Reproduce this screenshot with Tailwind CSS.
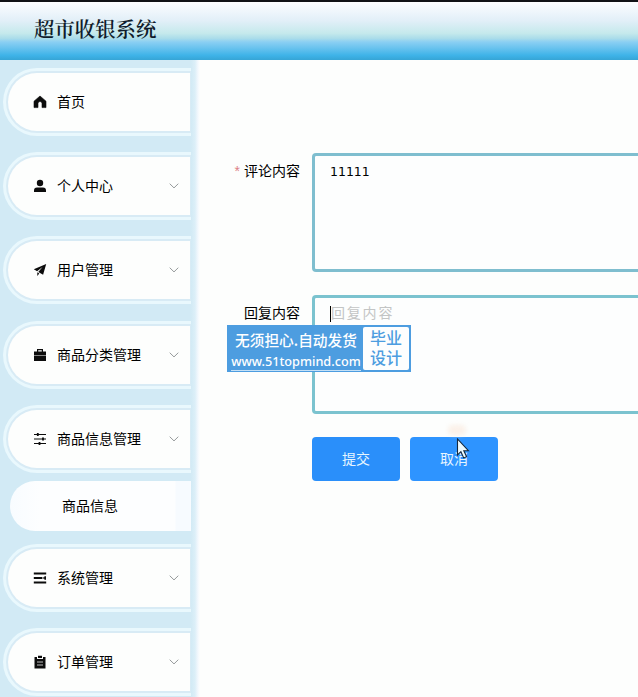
<!DOCTYPE html>
<html lang="zh-CN">
<head>
<meta charset="utf-8">
<title>超市收银系统</title>
<script src="https://cdn.jsdelivr.net/npm/@tailwindcss/browser@4"></script>
</head>
<body class="relative flex h-[697px] w-[638px] flex-col overflow-hidden bg-[#fdfefd] text-[14px] text-black font-['Liberation_Sans','Noto_Sans_CJK_SC',sans-serif]">
<header class="flex h-[60px] shrink-0 items-center border-t-2 border-[#111216] bg-[linear-gradient(to_bottom,#fcfdff_0%,#e2eff8_32%,#c5e9ec_54%,#a9dcea_63%,#8acff3_69%,#67c2ee_80%,#3eb3e8_92%,#36a5d6_100%)] pb-[2px] pl-[34px]">
  <h1 class="text-[20.4px] font-semibold leading-none text-[#101c2b] font-['Liberation_Serif','Noto_Serif_CJK_SC','Noto_Sans_CJK_SC',serif]">超市收银系统</h1>
</header>
<div class="flex min-h-0 flex-1">
  <aside class="h-full w-[200px] shrink-0 bg-[linear-gradient(to_right,#d2eaf5_0px,#d2eaf5_191px,#dceff8_195px,#f3f8fd_198px,#fdfefd_200px)] pl-[3px] pt-[8px]">
    <nav class="flex w-[188px] flex-col">
      <a class="mb-[16.2px] flex h-[68px] shrink-0 rounded-l-[34px] border-[3px] border-r-0 border-[#e9f8fd] bg-[#d8ebf5] py-[2px] pl-[2px]"><span class="mr-px flex flex-1 items-center rounded-l-[29px] bg-[#fdfefd] pl-[25px] pr-[11px]">
        <svg class="mr-[10px] size-[14px]" viewBox="0 0 14 14"><path d="M7 1 13 6.2V12.6H9V8.5a2 2 0 0 0-4 0v4.1H1V6.2z" fill="#0c0c0c" stroke="#0c0c0c" stroke-width=".6" stroke-linejoin="round"/></svg>
        <span class="flex-1">首页</span></span></a>
      <a class="mb-[16.2px] flex h-[68px] shrink-0 rounded-l-[34px] border-[3px] border-r-0 border-[#e9f8fd] bg-[#d8ebf5] py-[2px] pl-[2px]"><span class="mr-px flex flex-1 items-center rounded-l-[29px] bg-[#fdfefd] pl-[25px] pr-[11px]">
        <svg class="mr-[10px] size-[14px]" viewBox="0 0 14 14" fill="#0c0c0c"><circle cx="7" cy="4" r="3.2"/><path d="M1 13v-1.5Q1 8.5 4 8.5h6q3 0 3 3V13z"/></svg>
        <span class="flex-1">个人中心</span>
        <svg class="h-[6px] w-[10px]" viewBox="0 0 10 6" fill="none" stroke="#969a9b"><path d="m.7.7 4.3 4.2L9.3.7"/></svg></span></a>
      <a class="mb-[16.2px] flex h-[68px] shrink-0 rounded-l-[34px] border-[3px] border-r-0 border-[#e9f8fd] bg-[#d8ebf5] py-[2px] pl-[2px]"><span class="mr-px flex flex-1 items-center rounded-l-[29px] bg-[#fdfefd] pl-[25px] pr-[11px]">
        <svg class="mr-[10px] size-[14px]" viewBox="0 0 14 14" fill="#0c0c0c"><path d="M13.2 1 .8 6.3l3.3 1.9 5.4-4.1-4.2 4.8 4.8 2.9zM4.3 9.2v3.7l2-2.4z"/></svg>
        <span class="flex-1">用户管理</span>
        <svg class="h-[6px] w-[10px]" viewBox="0 0 10 6" fill="none" stroke="#969a9b"><path d="m.7.7 4.3 4.2L9.3.7"/></svg></span></a>
      <a class="mb-[16.2px] flex h-[68px] shrink-0 rounded-l-[34px] border-[3px] border-r-0 border-[#e9f8fd] bg-[#d8ebf5] py-[2px] pl-[2px]"><span class="mr-px flex flex-1 items-center rounded-l-[29px] bg-[#fdfefd] pl-[25px] pr-[11px] pt-px">
        <svg class="mr-[10px] size-[14px]" viewBox="0 0 14 14" fill="#0c0c0c"><path fill-rule="evenodd" d="M4 3.5V1h6v2.5h3v4H1v-4zm1.2 0h3.6V2.2H5.2zM1 8.1h12V13H1z"/></svg>
        <span class="flex-1">商品分类管理</span>
        <svg class="h-[6px] w-[10px]" viewBox="0 0 10 6" fill="none" stroke="#969a9b"><path d="m.7.7 4.3 4.2L9.3.7"/></svg></span></a>
      <a class="mb-[8.2px] flex h-[68px] shrink-0 rounded-l-[34px] border-[3px] border-r-0 border-[#e9f8fd] bg-[#d8ebf5] py-[2px] pl-[2px]"><span class="mr-px flex flex-1 items-center rounded-l-[29px] bg-[#fdfefd] pl-[25px] pr-[11px] pt-px">
        <svg class="mr-[10px] size-[14px]" viewBox="0 0 14 14" fill="none" stroke="#0c0c0c" stroke-width="1.2"><path d="M1 2.5h12M1 7h12M1 11.5h12"/><path d="M4.8 1.1v2.8M10 5.6v2.8M6.5 10.1v2.8" stroke-width="1.8"/></svg>
        <span class="flex-1">商品信息管理</span>
        <svg class="h-[6px] w-[10px]" viewBox="0 0 10 6" fill="none" stroke="#969a9b"><path d="m.7.7 4.3 4.2L9.3.7"/></svg></span></a>
      <a class="mb-[13.2px] ml-[7px] flex h-[50px] shrink-0 items-center rounded-l-[25px] bg-[linear-gradient(to_right,#f8fcff_0px,#fdfeff_30px,#fdfeff_165px,#f7fbff_166px)] pl-[52px] pt-[2px]">商品信息</a>
      <a class="mb-[16.2px] flex h-[68px] shrink-0 rounded-l-[34px] border-[3px] border-r-0 border-[#e9f8fd] bg-[#d8ebf5] py-[2px] pl-[2px]"><span class="mr-px flex flex-1 items-center rounded-l-[29px] bg-[#fdfefd] pl-[25px] pr-[11px]">
        <svg class="mr-[10px] size-[14px]" viewBox="0 0 14 14" fill="none" stroke="#0c0c0c" stroke-width="1.8"><path d="M.8 2.5h12.4M.8 7h8.6M.8 11.5h12.4"/><path d="M12.2 5.2v3.6M10.2 7h2" stroke-width="1.6"/></svg>
        <span class="flex-1">系统管理</span>
        <svg class="h-[6px] w-[10px]" viewBox="0 0 10 6" fill="none" stroke="#969a9b"><path d="m.7.7 4.3 4.2L9.3.7"/></svg></span></a>
      <a class="flex h-[68px] shrink-0 rounded-l-[34px] border-[3px] border-r-0 border-[#e9f8fd] bg-[#d8ebf5] py-[2px] pl-[2px]"><span class="mr-px flex flex-1 items-center rounded-l-[29px] bg-[#fdfefd] pl-[25px] pr-[11px]">
        <svg class="mr-[10px] size-[14px]" viewBox="0 0 14 14"><path d="M1.5 2H4v2h6V2h2.5v11.5h-11zM5 .8h4V3H5z" fill="#0c0c0c"/><path d="M4 7h6M4 10h6" stroke="#d5d5d5" stroke-width=".9"/></svg>
        <span class="flex-1">订单管理</span>
        <svg class="h-[6px] w-[10px]" viewBox="0 0 10 6" fill="none" stroke="#969a9b"><path d="m.7.7 4.3 4.2L9.3.7"/></svg></span></a>
    </nav>
  </aside>
  <main class="min-w-0 flex-1 pt-[93px]">
    <div class="mb-[23px] flex h-[119px]">
      <label class="w-[112px] shrink-0 pr-[12px] pt-[8px] text-right leading-[20px]"><span class="mr-[4px] text-[#dc8287]">*</span>评论内容</label>
      <div class="flex-1 rounded-l-[4px] border-[3px] border-r-0 border-[#7fbecf] bg-[#fdfefe] pl-[15px] pt-[6px] font-['DejaVu_Sans'] text-[12.5px] leading-[20px]">11111</div>
    </div>
    <div class="mb-[23px] flex h-[119px]">
      <label class="w-[112px] shrink-0 pr-[12px] pt-[8px] text-right leading-[20px]">回复内容</label>
      <div class="flex flex-1 rounded-l-[4px] border-[3px] border-r-0 border-[#7bc3cf] bg-[#fdfefe] pl-[15px] pt-[5px] leading-[20px] tracking-[1.8px] text-[#c3c5c5]"><span class="mt-[3px] h-[16px] w-px bg-black"></span><span>回复内容</span></div>
    </div>
    <div class="flex gap-[10px] pl-[112px] text-[#e6f5ff]">
      <div class="flex h-[44px] w-[88px] items-center justify-center rounded-[4px] bg-[#2a8ffa]">提交</div>
      <div class="flex h-[44px] w-[88px] items-center justify-center rounded-[4px] bg-[#2e94ff]">取消</div>
    </div>
  </main>
</div>
<div class="absolute left-[227px] top-[325px] flex h-[47px] w-[184px] bg-[#4d9de0] p-[2px] font-['Noto_Sans_CJK_SC',sans-serif]">
  <div class="flex w-[134px] shrink-0 flex-col items-center text-white">
    <div class="mt-[3px] whitespace-nowrap text-[14.7px] font-medium leading-[20px]">无须担心.自动发货</div>
    <div class="mt-[2px] h-[19px] whitespace-nowrap border-b border-[#c4e0f6] font-['Noto_Sans'] text-[12.7px] font-medium leading-[18px]">www.51topmind.com</div>
  </div>
  <div class="flex-1 rounded-[2px] bg-[#fdfefe] text-center text-[16px] font-medium leading-[20px] text-[#4d9de0]">毕业<br>设计</div>
</div>
<div class="absolute left-[448px] top-[425px] h-[10px] w-[18px] rounded-full bg-[#faeee3]/80 blur-[2px]"></div>
<svg class="absolute left-[456px] top-[438px] h-[22px] w-[14px]" viewBox="0 0 14 22"><path d="M1.5 1v16l3.4-3.3 2.8 6.2 2.9-1.2-2.8-6h4.6z" fill="#effbff" stroke="#16283c" stroke-width="1.1"/></svg>
</body>
</html>
